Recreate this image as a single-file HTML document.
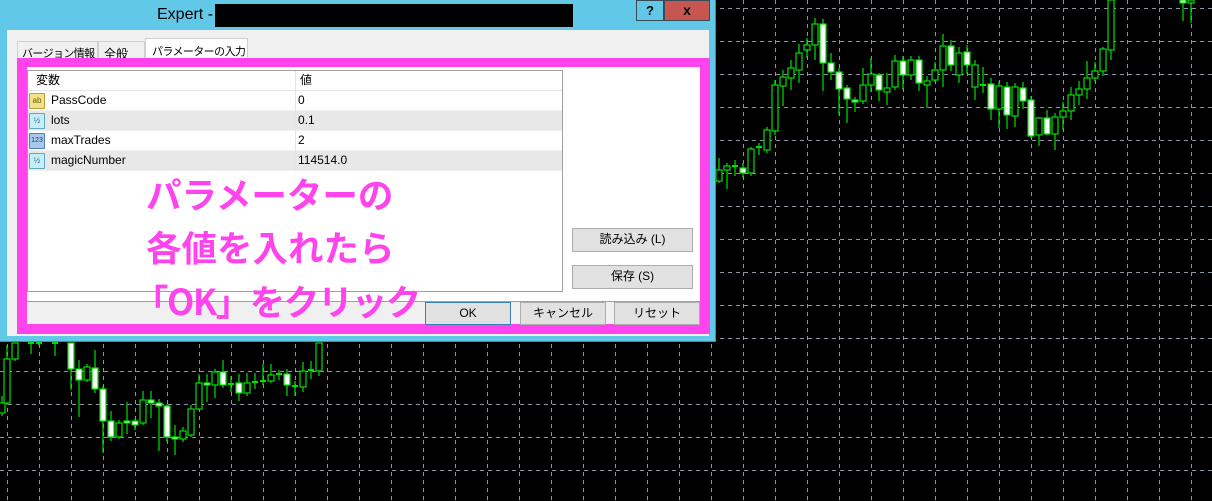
<!DOCTYPE html>
<html><head><meta charset="utf-8"><style>
*{margin:0;padding:0;box-sizing:border-box}
body{width:1212px;height:501px;background:#000;position:relative;overflow:hidden;font-family:"Liberation Sans","Noto Sans CJK JP",sans-serif;font-size:12px;color:#000}
.a{position:absolute}
.btn{position:absolute;background:#e1e1e1;border:1px solid #adadad;text-align:center;font-size:12px;line-height:20px}
.row{position:absolute;left:0;width:534px;height:20px;border-bottom:1px solid #f0f0f0;line-height:19px}
.row span{position:absolute}
.ic{position:absolute;left:1px;top:2px;width:16px;height:16px;border:1px solid;font-size:8px;line-height:14px;text-align:center;border-radius:1px}
.big{position:absolute;color:#ff44ee;font-weight:bold;font-size:35.5px;line-height:36px;white-space:nowrap;font-family:"Noto Sans CJK JP",sans-serif}
.tab{position:absolute;white-space:nowrap;font-size:11px;letter-spacing:-0.6px;border:1px solid #d0d0d0;border-bottom:none;overflow:visible}
</style></head><body>
<svg class="a" style="left:0;top:0" width="1212" height="501">
<g stroke="#8a96a4" stroke-width="1" stroke-dasharray="4,4">
<line x1="7.5" y1="0" x2="7.5" y2="501"/><line x1="39.5" y1="0" x2="39.5" y2="501"/><line x1="71.5" y1="0" x2="71.5" y2="501"/><line x1="103.5" y1="0" x2="103.5" y2="501"/><line x1="135.5" y1="0" x2="135.5" y2="501"/><line x1="167.5" y1="0" x2="167.5" y2="501"/><line x1="199.5" y1="0" x2="199.5" y2="501"/><line x1="231.5" y1="0" x2="231.5" y2="501"/><line x1="263.5" y1="0" x2="263.5" y2="501"/><line x1="295.5" y1="0" x2="295.5" y2="501"/><line x1="327.5" y1="0" x2="327.5" y2="501"/><line x1="359.5" y1="0" x2="359.5" y2="501"/><line x1="391.5" y1="0" x2="391.5" y2="501"/><line x1="423.5" y1="0" x2="423.5" y2="501"/><line x1="455.5" y1="0" x2="455.5" y2="501"/><line x1="487.5" y1="0" x2="487.5" y2="501"/><line x1="519.5" y1="0" x2="519.5" y2="501"/><line x1="551.5" y1="0" x2="551.5" y2="501"/><line x1="583.5" y1="0" x2="583.5" y2="501"/><line x1="615.5" y1="0" x2="615.5" y2="501"/><line x1="647.5" y1="0" x2="647.5" y2="501"/><line x1="679.5" y1="0" x2="679.5" y2="501"/><line x1="711.5" y1="0" x2="711.5" y2="501"/><line x1="743.5" y1="0" x2="743.5" y2="501"/><line x1="775.5" y1="0" x2="775.5" y2="501"/><line x1="807.5" y1="0" x2="807.5" y2="501"/><line x1="839.5" y1="0" x2="839.5" y2="501"/><line x1="871.5" y1="0" x2="871.5" y2="501"/><line x1="903.5" y1="0" x2="903.5" y2="501"/><line x1="935.5" y1="0" x2="935.5" y2="501"/><line x1="967.5" y1="0" x2="967.5" y2="501"/><line x1="999.5" y1="0" x2="999.5" y2="501"/><line x1="1031.5" y1="0" x2="1031.5" y2="501"/><line x1="1063.5" y1="0" x2="1063.5" y2="501"/><line x1="1095.5" y1="0" x2="1095.5" y2="501"/><line x1="1127.5" y1="0" x2="1127.5" y2="501"/><line x1="1159.5" y1="0" x2="1159.5" y2="501"/><line x1="1191.5" y1="0" x2="1191.5" y2="501"/>
<line x1="0" y1="8.5" x2="1212" y2="8.5"/><line x1="0" y1="41.5" x2="1212" y2="41.5"/><line x1="0" y1="74.5" x2="1212" y2="74.5"/><line x1="0" y1="107.5" x2="1212" y2="107.5"/><line x1="0" y1="140.5" x2="1212" y2="140.5"/><line x1="0" y1="173.5" x2="1212" y2="173.5"/><line x1="0" y1="206.5" x2="1212" y2="206.5"/><line x1="0" y1="239.5" x2="1212" y2="239.5"/><line x1="0" y1="272.5" x2="1212" y2="272.5"/><line x1="0" y1="305.5" x2="1212" y2="305.5"/><line x1="0" y1="338.5" x2="1212" y2="338.5"/><line x1="0" y1="371.5" x2="1212" y2="371.5"/><line x1="0" y1="404.5" x2="1212" y2="404.5"/><line x1="0" y1="437.5" x2="1212" y2="437.5"/><line x1="0" y1="470.5" x2="1212" y2="470.5"/>
</g>
<g id="c" stroke="#00e000" stroke-width="1.2"></g>
</svg>
<script>
var d=[
[719,170,181,158,183,0],[727,166,170,163,189,0],[735,166,168,160,176,2],[743,168,173,163,178,1],[751,149,173,147,176,0],[759,147,149,143,155,2],[767,130,150,127,153,0],[775,85,131,80,135,0],[783,77,86,70,106,0],[791,68,78,60,90,0],[799,53,70,44,83,0],[807,45,50,38,58,0],[815,24,45,18,60,0],[823,24,63,19,91,1],[831,63,72,53,80,1],[839,72,89,68,115,1],[847,88,99,85,123,1],[855,100,102,97,112,1],[863,85,101,68,104,0],[871,74,85,58,92,0],[879,75,90,73,101,1],[887,88,92,73,105,0],[895,61,87,55,90,0],[903,61,75,56,90,1],[911,60,75,56,80,0],[919,60,83,56,91,1],[927,81,85,76,108,0],[935,70,80,62,82,0],[943,46,70,34,87,0],[951,46,65,40,71,1],[959,53,75,47,83,0],[967,52,65,45,74,1],[975,65,87,60,100,0],[983,85,87,67,93,2],[991,84,109,78,120,1],[999,86,109,81,128,0],[1007,87,115,82,129,1],[1015,87,116,83,127,0],[1023,88,101,82,109,1],[1031,100,136,96,138,1],[1039,118,135,117,146,0],[1047,118,134,110,135,1],[1055,117,134,113,150,0],[1063,111,117,102,130,0],[1071,95,111,87,120,0],[1079,89,95,81,105,0],[1087,78,89,61,99,0],[1095,71,78,62,82,0],[1103,49,71,47,76,0],[1111,0,50,0,60,0],[1183,0,3,0,21,1],[1191,0,3,0,23,0],
[2,403,413,396,416,0],[7,359,403,345,405,0],[15,343,359,343,361,0],[31,343,343,343,354,2],[39,343,343,343,346,2],[55,343,343,343,356,2],
[71,343,369,343,390,1],[79,369,380,360,417,1],[87,367,380,364,382,0],[95,368,389,350,393,1],[103,389,421,386,453,1],[111,421,437,411,441,1],[119,423,437,420,439,0],[127,421,423,402,434,1],[135,421,425,419,430,1],[143,400,423,391,425,0],[151,400,403,391,418,1],[159,403,406,399,451,1],[167,406,437,404,442,1],[175,437,439,425,455,1],[183,431,439,427,442,0],[191,409,435,405,437,0],[199,383,409,374,410,0],[207,383,385,374,402,1],[215,372,385,369,398,0],[223,372,385,360,388,1],[231,384,386,376,392,2],[239,383,393,374,401,1],[247,383,393,373,396,0],[255,382,383,373,389,2],[263,381,382,364,385,2],[271,375,381,364,383,0],[279,374,375,370,380,2],[287,374,385,369,396,1],[295,386,386,381,396,2],[303,371,387,362,392,0],[311,370,371,361,379,2],[319,343,371,343,376,0]];
var s='';d.forEach(function(c){var x=c[0];s+='<line x1="'+x+'" y1="'+c[3]+'" x2="'+x+'" y2="'+c[4]+'"/>';
if(c[5]==2)s+='<line x1="'+(x-3)+'" y1="'+c[1]+'" x2="'+(x+3)+'" y2="'+c[1]+'" stroke-width="2"/>';
else s+='<rect x="'+(x-3)+'" y="'+c[1]+'" width="6" height="'+Math.max(2,c[2]-c[1])+'" fill="'+(c[5]?'#fff':'#000')+'"/>';});
document.getElementById('c').innerHTML=s;
</script>
<!-- window -->
<div class="a" style="left:0;top:0;width:716px;height:342px;background:#62c8e8;border-right:1px solid #3a8fb0;border-bottom:1px solid #3a8fb0"></div>
<div class="a" style="left:157px;top:6px;font-size:16px;color:#000">Expert -</div>
<div class="a" style="left:215px;top:4px;width:358px;height:23px;background:#000"></div>
<div class="a" style="left:636px;top:0;width:28px;height:21px;border:1px solid #3a4a55;text-align:center;font-weight:bold;font-size:13px;line-height:19px">?</div>
<div class="a" style="left:664px;top:0;width:46px;height:21px;background:#c75650;border:1px solid #3a4a55;text-align:center;font-weight:bold;font-size:14px;line-height:19px">x</div>
<div class="a" style="left:7px;top:30px;width:702px;height:306px;background:#f0f0f0"></div>
<div class="tab" style="left:17px;top:41px;width:81px;height:18px;background:#f0f0f0;padding:3px 0 0 4px">バージョン情報</div>
<div class="tab" style="left:98px;top:41px;width:47px;height:18px;background:#f0f0f0;padding:3px 0 0 5px;font-size:12px;letter-spacing:0">全般</div>
<div class="tab" style="left:145px;top:38px;width:103px;height:21px;background:#fff;padding:4px 0 0 6px">パラメーターの入力</div>
<div class="a" style="left:17px;top:58px;width:693px;height:276px;background:#ff44ee"></div>
<div class="a" style="left:27px;top:67px;width:673px;height:234px;background:#fff"></div>
<div class="a" style="left:27px;top:301px;width:673px;height:23px;background:#f0f0f0;border-top:1px solid #a0a0a0"></div>
<!-- table -->
<div class="a" style="left:27px;top:70px;width:536px;height:222px;border:1px solid #a0a0a0;background:#fff">
<div class="row" style="top:0;background:#fff;border-bottom:1px solid #e5e5e5"><span style="left:8px">変数</span><span style="left:272px">値</span></div>
<div class="row" style="top:20px"><div class="ic" style="background:#f2e38a;border-color:#b8a040;color:#6a5a00">ab</div><span style="left:23px">PassCode</span><span style="left:270px">0</span></div>
<div class="row" style="top:40px;background:#e8e8e8"><div class="ic" style="background:#c6eef8;border-color:#60a8c0;color:#30708a">½</div><span style="left:23px">lots</span><span style="left:270px">0.1</span></div>
<div class="row" style="top:60px"><div class="ic" style="background:#a8c8ec;border-color:#5080b8;color:#203a70;font-size:7px">123</div><span style="left:23px">maxTrades</span><span style="left:270px">2</span></div>
<div class="row" style="top:80px;background:#e8e8e8"><div class="ic" style="background:#c6eef8;border-color:#60a8c0;color:#30708a">½</div><span style="left:23px">magicNumber</span><span style="left:270px">114514.0</span></div>
<div class="a" style="left:267px;top:0;width:1px;height:100px;background:#e5e5e5"></div>
</div>
<div class="btn" style="left:572px;top:228px;width:121px;height:24px">読み込み (L)</div>
<div class="btn" style="left:572px;top:265px;width:121px;height:24px">保存 (S)</div>
<div class="btn" style="left:425px;top:302px;width:86px;height:23px;border-color:#3c7fb1">OK</div>
<div class="btn" style="left:520px;top:302px;width:86px;height:23px">キャンセル</div>
<div class="btn" style="left:614px;top:302px;width:86px;height:23px">リセット</div>
<div class="big" style="left:146px;top:176px">パラメーターの</div>
<div class="big" style="left:146px;top:229px">各値を入れたら</div>
<div class="big" style="left:133px;top:283px;letter-spacing:-1.5px">「OK」をクリック</div>
</body></html>
